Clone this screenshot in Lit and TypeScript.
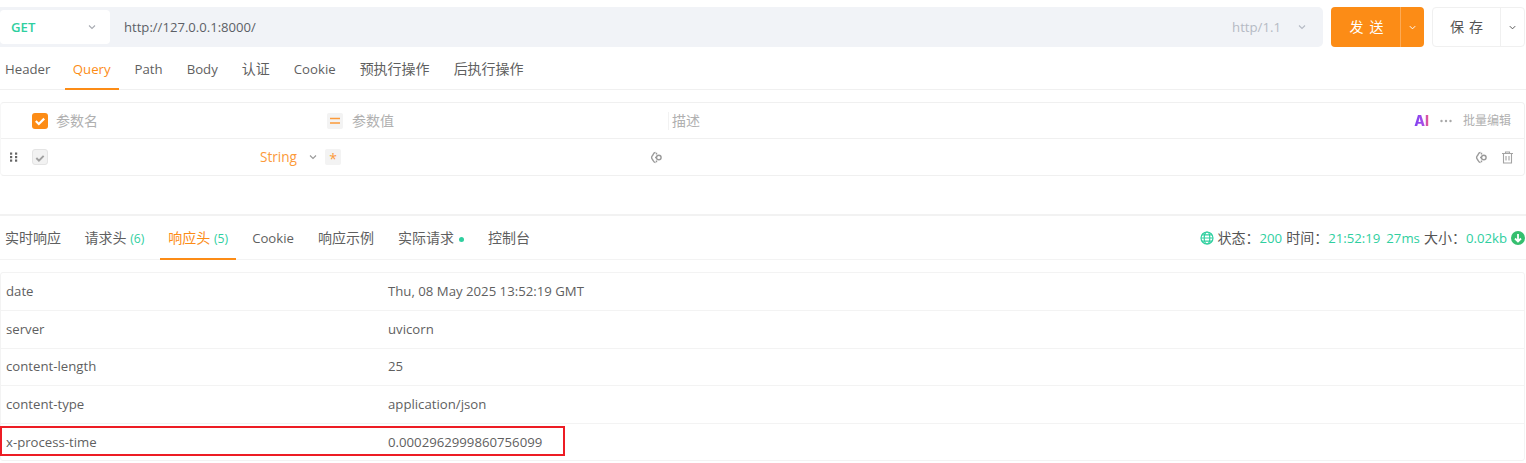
import { LitElement, html, css } from "lit";
import { customElement } from "lit/decorators.js";

const chev = (c = "#a8abb2", s = 10) => html`<svg width=${s} height=${s} viewBox="0 0 10 10" fill="none" stroke=${c} stroke-width="1.1"><path d="M2 3.5 5 6.5 8 3.5"/></svg>`;
const check = (c: string) => html`<svg width="16" height="16" viewBox="0 0 16 16" fill="none" stroke=${c} stroke-width="2.2"><path d="M3.8 8 6.8 11 12.2 5.6"/></svg>`;
const varIcon = html`<svg width="13" height="13" viewBox="0 0 13 13" fill="none" stroke="#9a9a9a" stroke-width="1.4"><path d="M5.500 1.500C3.200 1.500 3.600 3.300 2.500 4.500 1.300 5.700 1.300 7.300 2.500 8.500 3.600 9.700 3.200 11.500 5.500 11.500"/><path d="M6.500 1.800V3.400M6.500 9.600V11.200"/><circle cx="8.800" cy="6.500" r="2.300"/><path d="M5 6.500H6.500"/></svg>`;

@customElement("app-root")
export class AppRoot extends LitElement {
  static styles = css`
    :host { display: block; position: relative; width: 1526px; height: 463px; overflow: hidden; background: #fff; color: #555; font: 13.2px/18px "Open Sans", "Noto Sans CJK SC", sans-serif; }
    .zh { font-size: 14px; }
    .top { display: flex; height: 40px; margin-top: 7px; padding-right: 1px; }
    .url { width: 1323px; height: 40px; background: #f1f3f7; border-radius: 0 5px 5px 0; display: flex; align-items: center; box-sizing: border-box; padding-right: 16px; }
    .method { width: 110px; height: 34px; background: #fff; border-radius: 4px; display: flex; align-items: center; justify-content: space-between; box-sizing: border-box; padding: 0 13px 0 11px; font-weight: 600; color: #2fcf9f; }
    .addr { margin-left: 14px; flex: 1; color: #5c5f66; font-size: 13.1px; }
    .ver { color: #b5bac4; margin-right: 16px; }
    .send { margin-left: 8px; width: 93px; height: 40px; border-radius: 4px; background: #fc8c16; color: #fff; display: flex; }
    .save { margin-left: 8px; width: 93px; height: 40px; box-sizing: border-box; border: 1px solid #f0f0f0; border-radius: 4px; color: #555; display: flex; }
    .bmain { flex: 1; display: flex; align-items: center; justify-content: center; font-size: 14px; letter-spacing: 6px; padding-left: 8px; }
    .save .bmain { letter-spacing: 5px; padding-left: 5px; }
    .bdrop { width: 23px; display: flex; align-items: center; justify-content: center; }
    .send .bdrop { border-left: 1px solid #fdaa55; }
    .save .bdrop { border-left: 1px solid #f0f0f0; }
    .tabs { display: flex; height: 43px; border-bottom: 1px solid #f0f0f0; box-sizing: border-box; }
    .tab { padding: 13px 8px 0; margin-right: 8px; height: 43px; box-sizing: border-box; color: #5f5f5f; white-space: nowrap; }
    .tab:first-child { padding-left: 5px; margin-right: 6.5px; }
    .tab.on { color: #fc8c16; border-bottom: 2px solid #fc8c16; }
    .params { margin-top: 12px; height: 74px; border: 1px solid #f0f0f0; border-left-color: #f7f7f7; border-radius: 4px; box-sizing: border-box; margin-right: 1px; }
    .ph, .pr { display: flex; align-items: center; }
    .ph { height: 36px; border-bottom: 1px solid #f0f0f0; color: #b0b0b0; font-size: 14px; box-sizing: border-box; }
    .pr { height: 36px; }
    .cb { width: 16px; height: 16px; border-radius: 3px; display: flex; }
    .cb.a { background: #fc8c16; margin-left: 31px; }
    .cb.b { background: #f2f2f2; border: 1px solid #e4e4e4; box-sizing: border-box; margin-left: 13px; }
    .pname { margin-left: 8px; width: 271px; }
    .pval { width: 341px; display: flex; align-items: center; gap: 9px; }
    .pdesc { border-left: 1px solid #f2f2f2; padding-left: 3px; }
    .sq { width: 16px; height: 16px; border-radius: 2px; background: #f3f3f3; display: flex; align-items: center; justify-content: center; color: #fc9a3a; }
    .star { margin-left: 7px; font-size: 14px; padding-top: 3px; box-sizing: border-box; }
    .grip { margin-left: 8px; width: 10px; height: 10px; }
    .ptype { margin-left: 212px; color: #fc9a3a; width: 38px; font-size: 13.6px; }
    .pchev { margin-left: 10px; display: flex; }
    .pvar { margin-left: 309px; display: flex; }
    .right { margin-left: auto; display: flex; align-items: center; }
    .hright { gap: 11px; margin-right: 13px; }
    .rright { gap: 13px; margin-right: 10px; }
    .ai { font: 800 14px/14px "Inter", sans-serif; background: linear-gradient(90deg, #7b3ff2, #a64de8 62%, #f2577f); -webkit-background-clip: text; background-clip: text; color: transparent; }
    .batch { font-size: 12px; }
    .divider { height: 2px; background: #f2f2f2; margin-top: 38px; }
    .res { height: 44px; display: flex; border-bottom: 1px solid #f3f3f3; box-sizing: border-box; }
    .res .tab { height: 44px; }
    .res .tab:first-child { margin-right: 7.5px; }
    .n { color: #2fcf9f; font-size: 12.2px; }
    .dot { display: inline-block; width: 5px; height: 5px; border-radius: 50%; background: #2fcf9f; margin-left: 5px; vertical-align: 1px; }
    .status { margin-left: auto; margin-right: 1px; display: flex; align-items: center; gap: 4px; color: #555; height: 44px; }
    .status .zh { margin-right: -4px; }
    .g { color: #2fcf9f; }
    .g6 { margin-left: 2px; }
    .tbl { margin-top: 12px; border: 1px solid #f3f3f3; border-radius: 3px; margin-right: 1px; }
    .row { display: grid; grid-template-columns: 382px 1fr; height: 37.6px; align-items: center; padding: 0 0 1px 5px; border-top: 1px solid #f3f3f3; box-sizing: border-box; color: #5f5f5f; }
    .row:first-child { border-top: none; height: 37px; }
    .hl { position: absolute; left: 0; top: 426px; width: 565px; height: 30px; border: 2px solid #ed1c24; box-sizing: border-box; }
  `;
  render() {
    const rows = [["date", "Thu, 08 May 2025 13:52:19 GMT"], ["server", "uvicorn"], ["content-length", "25"], ["content-type", "application/json"], ["x-process-time", "0.0002962999860756099"]];
    const tabs: [string, boolean][] = [["Header", false], ["Query", false], ["Path", false], ["Body", false], ["认证", true], ["Cookie", false], ["预执行操作", true], ["后执行操作", true]];
    return html`
      <div class="top">
        <div class="url">
          <div class="method"><span>GET</span>${chev()}</div>
          <div class="addr">http://127.0.0.1:8000/</div>
          <span class="ver">http/1.1</span>${chev("#b5bac4")}
        </div>
        <div class="send"><div class="bmain">发送</div><div class="bdrop">${chev("#fff", 9)}</div></div>
        <div class="save"><div class="bmain">保存</div><div class="bdrop">${chev("#555", 9)}</div></div>
      </div>
      <div class="tabs">
        ${tabs.map(([t, zh]) => html`<div class="tab ${t === "Query" ? "on" : ""} ${zh ? "zh" : ""}">${t}</div>`)}
      </div>
      <div class="params">
        <div class="ph">
          <div class="cb a">${check("#fff")}</div>
          <span class="pname">参数名</span>
          <div class="pval"><div class="sq"><svg width="10" height="8" viewBox="0 0 10 8" stroke="#fc9a3a" stroke-width="1.6"><path d="M0 1.500H10M0 6H10"/></svg></div><span>参数值</span></div>
          <span class="pdesc">描述</span>
          <div class="right hright">
            <span class="ai">AI</span>
            <svg width="12" height="4" viewBox="0 0 12 4" fill="#a8a8a8"><circle cx="1.500" cy="2" r="1.200"/><circle cx="6" cy="2" r="1.200"/><circle cx="10.500" cy="2" r="1.200"/></svg>
            <span class="batch">批量编辑</span>
          </div>
        </div>
        <div class="pr">
          <svg class="grip" viewBox="0 0 10 10" fill="#666"><rect x="1" y="0.500" width="2.200" height="2.200"/><rect x="6" y="0.500" width="2.200" height="2.200"/><rect x="1" y="4" width="2.200" height="2.200"/><rect x="6" y="4" width="2.200" height="2.200"/><rect x="1" y="7.500" width="2.200" height="2.200"/><rect x="6" y="7.500" width="2.200" height="2.200"/></svg>
          <div class="cb b">${check("#a0a0a0")}</div>
          <span class="ptype">String</span>
          <span class="pchev">${chev("#999")}</span>
          <div class="sq star">*</div>
          <span class="pvar">${varIcon}</span>
          <div class="right rright">
            ${varIcon}
            <svg width="13" height="13" viewBox="0 0 13 13" fill="none" stroke="#a3a3a3" stroke-width="1.100"><path d="M1 2.500H12M4.500 2.500V1H8.500V2.500M2.500 2.500V12H10.500V2.500M5 5V9.500M8 5V9.500"/></svg>
          </div>
        </div>
      </div>
      <div class="divider"></div>
      <div class="res">
        <div class="tab zh">实时响应</div>
        <div class="tab zh">请求头 <span class="n">(6)</span></div>
        <div class="tab on zh">响应头 <span class="n">(5)</span></div>
        <div class="tab">Cookie</div>
        <div class="tab zh">响应示例</div>
        <div class="tab zh">实际请求<span class="dot"></span></div>
        <div class="tab zh">控制台</div>
        <div class="status">
          <svg width="14" height="14" viewBox="0 0 14 14" fill="none" stroke="#2fcf9f" stroke-width="1.200"><circle cx="7" cy="7" r="6"/><ellipse cx="7" cy="7" rx="2.800" ry="6"/><path d="M1 7H13M2 3.800H12M2 10.200H12"/></svg>
          <span class="zh">状态：</span><span class="g">200</span><span class="zh">时间：</span><span class="g">21:52:19</span><span class="g g6">27ms</span><span class="zh">大小：</span><span class="g">0.02kb</span>
          <svg width="14" height="14" viewBox="0 0 14 14"><circle cx="7" cy="7" r="7" fill="#35bf6f"/><path d="M7 3V10M4 7.500 7 10.500 10 7.500" stroke="#fff" stroke-width="1.800" fill="none"/></svg>
        </div>
      </div>
      <div class="tbl">
        ${rows.map((r) => html`<div class="row"><span>${r[0]}</span><span>${r[1]}</span></div>`)}
      </div>
      <div class="hl"></div>
    `;
  }
}
